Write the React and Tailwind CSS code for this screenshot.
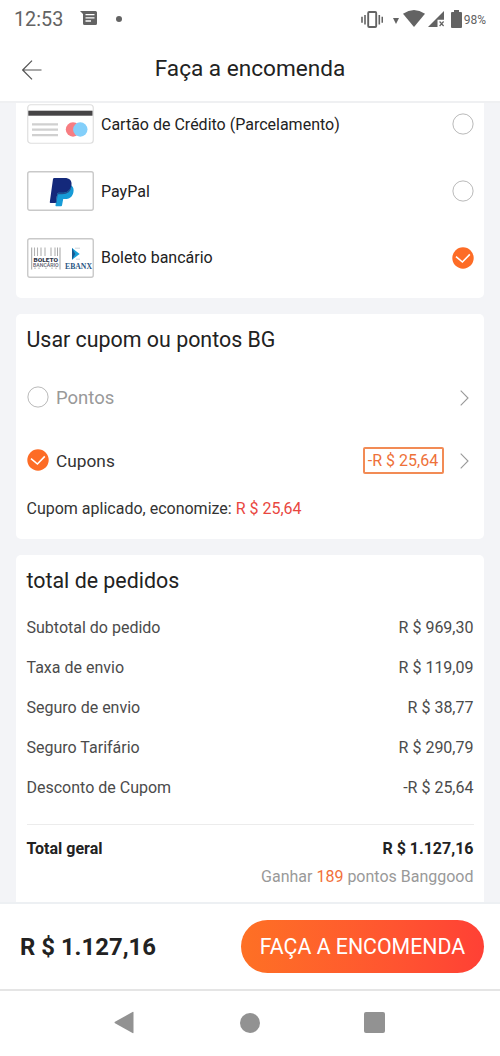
import { useState } from 'react';

const ORDER_LINES = [
  { label: 'Subtotal do pedido', value: 'R $ 969,30' },
  { label: 'Taxa de envio',      value: 'R $ 119,09' },
  { label: 'Seguro de envio',    value: 'R $ 38,77' },
  { label: 'Seguro Tarifário',   value: 'R $ 290,79' },
  { label: 'Desconto de Cupom',  value: '-R $ 25,64' },
];

function CardLogo() {
  return (
    <svg width="67" height="40" viewBox="0 0 67 40">
      <rect x="0.75" y="0.75" width="65.5" height="38.5" rx="3" fill="#fff" stroke="#dedede" strokeWidth="1.2" />
      <rect x="1.3" y="6.7" width="64.2" height="5" fill="#464446" />
      <path d="M5 20.3h26M5 25.7h26M5 31.2h26" stroke="#d0d0d0" strokeWidth="2.2" />
      <circle cx="46" cy="25.5" r="7.2" fill="#f77d82" />
      <circle cx="53.3" cy="25.5" r="7.2" fill="#83cffa" />
    </svg>
  );
}

function PayPalLogo() {
  return (
    <svg width="67" height="40" viewBox="0 0 67 40">
      <rect x="0.75" y="0.75" width="65.5" height="38.5" rx="2" fill="#fff" stroke="#c9c9c9" strokeWidth="1.4" />
      <path d="M31 14.5h13.5c2.2 1.8 2.5 4.4 1.8 7.2-1.1 4.4-4 6.4-8.4 6.4h-1.7l-1.2 6.4q-.2.7-.9.7h-5q-.8 0-.6-.8z" fill="#179bd7" />
      <path d="M27.4 7h10.3c4.7 0 7.4 2.5 6.8 6.8-.8 5.5-4.2 8-9.4 8h-3.6q-1.1 0-1.3 1.1L28.8 32h-5.2q-1 0-.8-1L26 8.1Q26.2 7 27.4 7z" fill="#14297b" />
      <path d="M31.6 21.8h3.5c5.2 0 8.6-2.5 9.4-8v1.2c-.6 5.6-4 8.2-9.4 8.2h-3.4q-.9 0-1.1.9l-1.1 7.9h-.7l1.4-9.1q.2-1.1 1.4-1.1z" fill="#22508f" />
    </svg>
  );
}

function BoletoLogo() {
  return (
    <svg width="67" height="40" viewBox="0 0 67 40">
      <rect x="0.75" y="0.75" width="65.5" height="38.5" rx="2" fill="#fff" stroke="#c9c9c9" strokeWidth="1.4" />
      <path d="M4.7 9.5v22M33 9.5v22" stroke="#999" strokeWidth="0.9" />
      <path d="M7.5 9.5v8.5M10.5 9.5v8.5M18 9.5v8.5M28 9.5v8.5" stroke="#b2b2b2" strokeWidth="1.1" />
      <path d="M14 9.5v8.5M24 9.5v8.5M30.5 9.5v8.5" stroke="#858585" strokeWidth="0.7" />
      <path d="M8 29.5v1.5M12 29.5v1.5M19 29.5v1.5M25 29.5v1.5M29 29.5v1.5" stroke="#aaa" strokeWidth="1" />
      <text x="6.5" y="24" textLength="24.5" lengthAdjust="spacingAndGlyphs" fontFamily="Roboto, sans-serif" fontSize="6" fontWeight="900" fill="#30354a">BOLETO</text>
      <text x="6" y="28.8" textLength="25.5" lengthAdjust="spacingAndGlyphs" fontFamily="Roboto, sans-serif" fontSize="4.6" fontWeight="500" fill="#5c606e">BANCÁRIO</text>
      <path d="M45 10l7.7 5.9-7.7 5.9z" fill="#18a0d8" />
      <path d="M45 10l3.3 5.9-3.3 5.9z" fill="#155a94" />
      <path d="M48 10.2h5M49 21.2h4" stroke="#c4ccd3" strokeWidth="0.8" />
      <text x="38" y="31" textLength="27" lengthAdjust="spacingAndGlyphs" fontFamily="'Liberation Serif', serif" fontSize="8.8" fontWeight="700" fill="#2a5684">EBANX</text>
    </svg>
  );
}

const METHODS = [
  { id: 'card',   label: 'Cartão de Crédito (Parcelamento)', Logo: CardLogo },
  { id: 'paypal', label: 'PayPal',                           Logo: PayPalLogo },
  { id: 'boleto', label: 'Boleto bancário',                  Logo: BoletoLogo },
];

function Radio({ checked }) {
  return (
    <svg width="22" height="22" viewBox="0 0 22 22" className="shrink-0">
      {checked ? (
        <>
          <circle cx="11" cy="11" r="10.7" fill="#fd6c26" />
          <path d="M4 9.6l6.4 5.4 7.4-7.6" fill="none" stroke="#fff" strokeWidth="1.6" />
        </>
      ) : (
        <circle cx="11" cy="11" r="10.1" fill="#fff" stroke="#b9b9b9" strokeWidth="1" />
      )}
    </svg>
  );
}

function Chevron() {
  return (
    <svg width="9" height="16" viewBox="0 0 9 16" className="shrink-0 mr-[4.5px]">
      <path d="M0.7 0.7L8 8l-7.3 7.3" fill="none" stroke="#999" strokeWidth="1.1" />
    </svg>
  );
}

function StatusBar() {
  return (
    <div className="h-[38px] shrink-0 flex items-center justify-between px-[14px] text-[#636363]">
      <div className="flex items-center">
        <span className="w-[66px] text-[19.8px] leading-none pt-[2px]">12:53</span>
        <svg width="17" height="15" viewBox="0 0 17 15">
          <path d="M0 0h15.5q1.5 0 1.5 1.5v11q0 1.5-1.5 1.5h-11Q3 14 3 12.5V3z" fill="#636363" />
          <path d="M5.5 3.6h9M5.5 6.8h9M5.5 10h5.5" stroke="#fff" strokeWidth="1.3" />
        </svg>
        <span className="ml-[19px] w-[6px] h-[6px] rounded-full bg-[#636363]" />
      </div>
      <div className="flex items-center">
        <svg width="22" height="17" viewBox="0 0 22 17">
          <rect x="7.2" y="1" width="8" height="15" rx="1" fill="none" stroke="#636363" strokeWidth="1.9" />
          <path d="M1 5.7v6M4 4v9.5M18.3 4v9.5M21.3 5.7v6" stroke="#636363" strokeWidth="1.6" />
        </svg>
        <svg width="6" height="6" viewBox="0 0 6 6" className="ml-[10px] mt-[4px]">
          <path d="M0 0h6L3 6z" fill="#636363" />
        </svg>
        <svg width="22" height="17" viewBox="0 0 22 17" className="ml-[4px] -mt-px">
          <path d="M0 3.7Q11-3.7 22 3.7L11 17z" fill="#636363" />
        </svg>
        <svg width="17" height="16" viewBox="0 0 17 16" className="ml-[3px]">
          <path d="M16 0v8.8H9.5V16H0z" fill="#636363" />
          <path d="M11.6 10.5l4 4.5M15.6 10.5l-4 4.5" stroke="#636363" strokeWidth="1.2" />
        </svg>
        <svg width="11" height="18" viewBox="0 0 11 18" className="ml-[6px]">
          <path d="M3 0h5v2h2q1 0 1 1v14q0 1-1 1H1q-1 0-1-1V3q0-1 1-1h2z" fill="#636363" />
        </svg>
        <span className="ml-[2px] text-[12px] leading-none pt-px">98%</span>
      </div>
    </div>
  );
}

export default function App() {
  const [method, setMethod] = useState('boleto');

  return (
    <div className="w-[500px] h-[1056px] flex flex-col overflow-hidden bg-white text-[#222] font-[Roboto,sans-serif]">
      <StatusBar />

      <header className="h-[65px] shrink-0 grid grid-cols-[60px_1fr_60px] items-center border-b-2 border-[#eff0f2]">
        <button className="ml-[22px]" aria-label="Voltar">
          <svg width="20" height="20" viewBox="0 0 20 20">
            <path d="M19.5 10H1M10 0.7L0.7 10l9.3 9.3" fill="none" stroke="#555" strokeWidth="1.2" />
          </svg>
        </button>
        <h1 className="text-center text-[22.6px] leading-none">Faça a encomenda</h1>
      </header>

      <main className="h-[799px] shrink-0 overflow-hidden bg-[#f3f4f7] px-4 flex flex-col gap-4">
        {/* Payment methods */}
        <section className="h-[195px] shrink-0 overflow-hidden bg-white rounded-b-[5px] pl-[10.5px] pr-[10.5px]">
          <div className="-mt-[12px]">
            {METHODS.map(({ id, label, Logo }) => (
              <button key={id} onClick={() => setMethod(id)} className="w-full h-[66.8px] flex items-center text-left">
                <Logo />
                <span className="ml-[7.5px] pt-px flex-1 text-base">{label}</span>
                <Radio checked={method === id} />
              </button>
            ))}
          </div>
        </section>

        {/* Coupon or points */}
        <section className="h-[225px] shrink-0 bg-white rounded-[5px] px-[10.5px] pt-[11px]">
          <h2 className="text-[21.4px] leading-[30px]">Usar cupom ou pontos BG</h2>
          <div className="mt-[26px] h-[34px] flex items-center">
            <div className="pb-[2px]"><Radio /></div>
            <span className="ml-[7.5px] pt-[2px] flex-1 text-[18.5px] text-[#999]">Pontos</span>
            <Chevron />
          </div>
          <div className="mt-[29px] h-[34px] flex items-center">
            <div className="pb-[3px]"><Radio checked /></div>
            <span className="ml-[7.5px] pt-[2px] flex-1 text-[17.3px] text-[#333]">Cupons</span>
            <span className="mr-[16.5px] mb-px w-[81px] h-[27px] flex items-center justify-center border-2 border-[#f28b55] rounded-[2px] text-base text-[#ee7139]">-R $ 25,64</span>
            <Chevron />
          </div>
          <p className="mt-[19px] text-base text-[#333]">
            Cupom aplicado, economize: <span className="text-[#e9473f]">R $ 25,64</span>
          </p>
        </section>

        {/* Order totals */}
        <section className="flex-1 bg-white rounded-t-[5px] px-[10.5px] pt-[11px]">
          <h2 className="text-[21.4px] leading-[30px]">total de pedidos</h2>
          <div className="mt-[12.5px]">
            {ORDER_LINES.map(line => (
              <div key={line.label} className="h-[39.8px] flex items-center justify-between text-base text-[#4b4b4b]">
                <span>{line.label}</span>
                <span>{line.value}</span>
              </div>
            ))}
          </div>
          <div className="mt-[16.5px] pt-[12.5px] border-t border-[#ececec] flex justify-between text-base font-bold">
            <span>Total geral</span>
            <span>R $ 1.127,16</span>
          </div>
          <p className="mt-[3.5px] text-right text-base text-[#999]">
            Ganhar <span className="text-[#f2703a]">189</span> pontos Banggood
          </p>
        </section>
      </main>

      <footer className="h-[89px] shrink-0 flex items-center justify-between pl-5 pr-4 border-t-2 border-b-2 border-t-[#edf0f3] border-b-[#e5e5e5]">
        <strong className="text-[23.9px] font-bold leading-none pt-[2px]">R $ 1.127,16</strong>
        <button className="w-[243px] h-[53px] rounded-full bg-gradient-to-r from-[#fe7024] to-[#ff4035] text-white text-[21.3px]">
          FAÇA A ENCOMENDA
        </button>
      </footer>

      <nav className="h-[65px] shrink-0 flex items-center justify-center pr-px pb-[2px]">
        <svg width="20" height="23" viewBox="0 0 20 23">
          <path d="M18.5 1Q19.5 0.5 19.5 1.5v20q0 1-1 .5L1 12.2q-1-.7 0-1.4z" fill="#929292" />
        </svg>
        <span className="ml-[106px] w-5 h-5 rounded-full bg-[#929292]" />
        <span className="ml-[104px] w-[21px] h-[21px] rounded-[2px] bg-[#929292]" />
      </nav>
    </div>
  );
}
